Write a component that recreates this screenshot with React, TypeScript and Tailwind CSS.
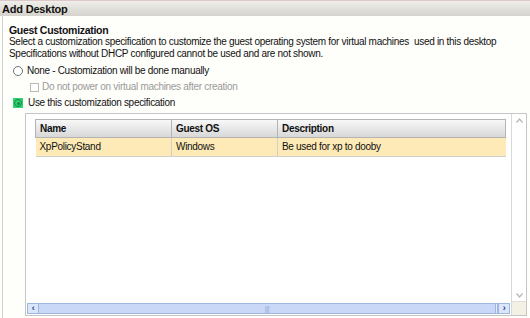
import React from "react";

const ROWS = [{ name: "XpPolicyStand", os: "Windows", description: "Be used for xp to dooby" }];

function Radio({ checked }: { checked?: boolean }) {
  if (checked) {
    return (
      <span className="flex h-[10px] w-[10px] items-center justify-center bg-[#2fd36f]">
        <span className="flex h-[8px] w-[8px] items-center justify-center rounded-full border border-[#138a45]">
          <span className="h-[3px] w-[3px] rounded-full bg-[#138a45]" />
        </span>
      </span>
    );
  }
  return <span className="h-[10px] w-[10px] rounded-full border border-[#6b7280] bg-white" />;
}

export default function App() {
  return (
    <div
      className="flex h-[318px] w-[530px] flex-col overflow-hidden bg-[#fefefb] text-[10px] leading-[12px] tracking-[-0.3px] text-[#111]"
      style={{ fontFamily: '"Liberation Sans", Arial, sans-serif' }}
    >
      <div className="h-[16px] shrink-0 border-t border-[#dcc8c8] bg-gradient-to-b from-[#efeeea] to-[#d5d3cc] pl-[2px] pt-[2px] text-[11px] font-bold leading-[12px] tracking-[-0.2px]">
        Add Desktop
      </div>

      <div className="ml-[2px] flex flex-1 flex-col border-l border-[#d2d2d2] pl-[6px] pt-[8px]">
        <div className="font-bold text-[10.5px]">Guest Customization</div>
        <div>
          Select a customization specification to customize the guest operating system for virtual machines&nbsp; used in
          this desktop
        </div>
        <div>Specifications without DHCP configured cannot be used and are not shown.</div>

        <label className="mt-[5px] flex items-center gap-[4px] pl-[4px]">
          <Radio />
          <span>None - Customization will be done manually</span>
        </label>
        <label className="mt-[4px] flex items-center gap-[3px] pl-[21px] text-[#9a9a9a]">
          <span className="h-[9px] w-[9px] border border-[#b8b8b8] bg-white" />
          <span>Do not power on virtual machines after creation</span>
        </label>
        <label className="mt-[4px] flex items-center gap-[5px] pl-[4px]">
          <Radio checked />
          <span>Use this customization specification</span>
        </label>

        <div className="mt-[4px] ml-[16px] mr-[3px] flex flex-1 border border-[#c6c6c6] bg-white">
          <div className="flex flex-1 flex-col">
            <div className="flex-1 pl-[9px] pr-[5px] pt-[5px]">
              <table className="w-full border-collapse">
                <thead>
                  <tr className="h-[18px] bg-gradient-to-b from-[#f8f8f8] to-[#d6d6d6] text-left">
                    <th className="w-[136px] border border-[#b4b4b4] pl-[4px] font-bold">Name</th>
                    <th className="w-[106px] border border-[#b4b4b4] pl-[4px] font-bold">Guest OS</th>
                    <th className="border border-[#b4b4b4] pl-[4px] font-bold">Description</th>
                  </tr>
                </thead>
                <tbody>
                  {ROWS.map((row) => (
                    <tr key={row.name} className="h-[19px] bg-[#fdeab6]">
                      <td className="border-b border-r border-[#d0cfc8] pl-[4px]">{row.name}</td>
                      <td className="border-b border-r border-[#d0cfc8] pl-[4px]">{row.os}</td>
                      <td className="border-b border-[#d0cfc8] pl-[4px]">{row.description}</td>
                    </tr>
                  ))}
                </tbody>
              </table>
            </div>
            <div className="mx-[1px] mb-[1px] flex h-[11px] items-stretch border border-[#9fb6e0] bg-[#c8d8f6]">
              <span className="flex w-[11px] items-center justify-center border-r border-[#9fb6e0] bg-[#dbe6fa] text-[9px] font-bold leading-none text-[#1f3c88]">
                ‹
              </span>
              <span className="flex flex-1 items-center justify-center text-[7px] leading-none text-[#90a8d8]">|||</span>
              <span className="w-[3px] border-x border-[#9fb6e0] bg-[#e6eefc]" />
              <span className="flex w-[11px] items-center justify-center border-l border-[#9fb6e0] bg-[#dbe6fa] text-[9px] font-bold leading-none text-[#1f3c88]">
                ›
              </span>
            </div>
          </div>
          <div className="flex w-[15px] flex-col border-l border-[#d8d8d8] bg-white">
            <span className="flex h-[12px] items-center justify-center">
              <svg width="7" height="5" viewBox="0 0 7 5">
                <path d="M0.5 4.5 L3.5 1 L6.5 4.5" fill="none" stroke="#b9b9b0" strokeWidth="1.2" />
              </svg>
            </span>
            <span className="flex-1" />
            <span className="flex h-[12px] items-center justify-center border-b border-[#deded4]">
              <svg width="7" height="5" viewBox="0 0 7 5">
                <path d="M0.5 0.5 L3.5 4 L6.5 0.5" fill="none" stroke="#b9b9b0" strokeWidth="1.2" />
              </svg>
            </span>
            <span className="h-[13px] bg-[#f3f1e3]" />
          </div>
        </div>
        <div className="h-[2px]" />
      </div>
    </div>
  );
}
